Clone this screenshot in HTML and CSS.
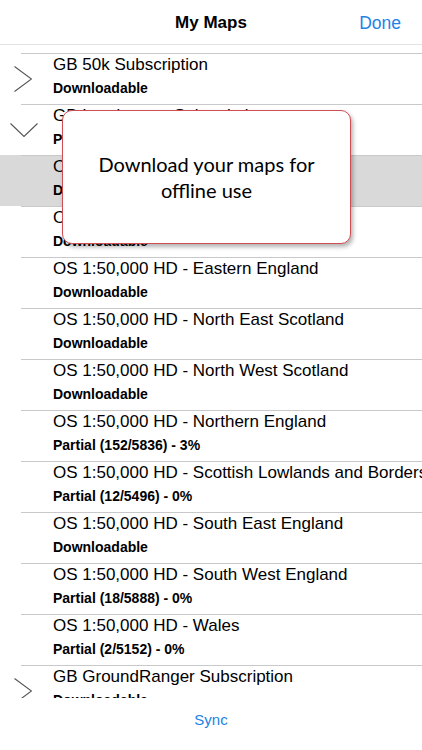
FILE: index.html
```html
<!DOCTYPE html>
<html lang="en">

<head>
    <meta charset="UTF-8">
    <title>My Maps</title>
    <link rel="stylesheet" href="styles.css">
</head>

<body>
    <header class="topbar">
        <span class="topbar_spacer"></span>
        <h1 class="topbar_title">My Maps</h1>
        <a href="#" class="topbar_done">Done</a>
    </header>

    <main class="maps">
        <section class="maps_list">
            <article class="map">
                <div class="map_mark">
                    <svg width="18" height="26" viewBox="0 0 18 26"><path d="M0.5 0.5 L17.5 13 L0.5 25.5" fill="none" stroke="#555" stroke-width="1.1"/></svg>
                </div>
                <div class="map_text">
                    <p class="map_name">GB 50k Subscription</p>
                    <p class="map_state">Downloadable</p>
                </div>
            </article>
            <article class="map">
                <div class="map_mark open">
                    <svg width="28" height="14" viewBox="0 0 28 14"><path d="M0.5 0.5 L14 13.5 L27.5 0.5" fill="none" stroke="#555" stroke-width="1.1"/></svg>
                </div>
                <div class="map_text">
                    <p class="map_name">GB Landranger Subscription</p>
                    <p class="map_state">Partial (164/96376) - 0%</p>
                </div>
            </article>
            <article class="map valgt">
                <div class="map_mark"></div>
                <div class="map_text">
                    <p class="map_name">OS 1:50,000 HD - Central England</p>
                    <p class="map_state">Downloadable</p>
                </div>
            </article>
            <article class="map">
                <div class="map_mark"></div>
                <div class="map_text">
                    <p class="map_name">OS 1:50,000 HD - Central Scotland</p>
                    <p class="map_state">Downloadable</p>
                </div>
            </article>
            <article class="map">
                <div class="map_mark"></div>
                <div class="map_text">
                    <p class="map_name">OS 1:50,000 HD - Eastern England</p>
                    <p class="map_state">Downloadable</p>
                </div>
            </article>
            <article class="map">
                <div class="map_mark"></div>
                <div class="map_text">
                    <p class="map_name">OS 1:50,000 HD - North East Scotland</p>
                    <p class="map_state">Downloadable</p>
                </div>
            </article>
            <article class="map">
                <div class="map_mark"></div>
                <div class="map_text">
                    <p class="map_name">OS 1:50,000 HD - North West Scotland</p>
                    <p class="map_state">Downloadable</p>
                </div>
            </article>
            <article class="map">
                <div class="map_mark"></div>
                <div class="map_text">
                    <p class="map_name">OS 1:50,000 HD - Northern England</p>
                    <p class="map_state">Partial (152/5836) - 3%</p>
                </div>
            </article>
            <article class="map">
                <div class="map_mark"></div>
                <div class="map_text">
                    <p class="map_name">OS 1:50,000 HD - Scottish Lowlands and Borders</p>
                    <p class="map_state">Partial (12/5496) - 0%</p>
                </div>
            </article>
            <article class="map">
                <div class="map_mark"></div>
                <div class="map_text">
                    <p class="map_name">OS 1:50,000 HD - South East England</p>
                    <p class="map_state">Downloadable</p>
                </div>
            </article>
            <article class="map">
                <div class="map_mark"></div>
                <div class="map_text">
                    <p class="map_name">OS 1:50,000 HD - South West England</p>
                    <p class="map_state">Partial (18/5888) - 0%</p>
                </div>
            </article>
            <article class="map">
                <div class="map_mark"></div>
                <div class="map_text">
                    <p class="map_name">OS 1:50,000 HD - Wales</p>
                    <p class="map_state">Partial (2/5152) - 0%</p>
                </div>
            </article>
            <article class="map">
                <div class="map_mark">
                    <svg width="18" height="26" viewBox="0 0 18 26"><path d="M0.5 0.5 L17.5 13 L0.5 25.5" fill="none" stroke="#555" stroke-width="1.1"/></svg>
                </div>
                <div class="map_text">
                    <p class="map_name">GB GroundRanger Subscription</p>
                    <p class="map_state">Downloadable</p>
                </div>
            </article>
        </section>

        <div class="tip">
            <p>Download your maps for<br>offline use</p>
        </div>
    </main>

    <footer class="bottombar">
        <a href="#" class="bottombar_sync">Sync</a>
    </footer>
</body>

</html>
```

FILE: styles.css
```css
body {
    margin: 0;
    width: 422px;
    height: 750px;
    overflow: hidden;
    background-color: #fff;
    font-family: "Liberation Sans", Arial, sans-serif;
    color: #000;
}

p {
    margin: 0;
}

a {
    text-decoration: none;
    color: #2283e6;
}

.topbar {
    height: 45px;
    border-bottom: 1px solid #e3e3e3;
    display: grid;
    grid-template-columns: 1fr auto 1fr;
    align-items: center;
    padding-top: 2px;
    box-sizing: border-box;
}

.topbar_title {
    margin: 0;
    font-size: 17px;
    font-weight: 700;
}

.topbar_done {
    justify-self: end;
    padding-right: 21px;
    font-size: 17.5px;
}

.maps {
    position: relative;
    height: 653px;
    overflow: hidden;
}

.maps_list {
    padding-top: 8px;
}

.map {
    display: flex;
    height: 51px;
    background: linear-gradient(#c9c9cc, #c9c9cc) 21px 0 / 100% 1px no-repeat;
}

.map.valgt {
    background-color: #d9d9d9;
}

.map_mark {
    width: 53px;
    flex: none;
    display: flex;
    align-items: center;
    padding: 1px 0 0 14px;
    box-sizing: border-box;
}

.map_mark.open {
    padding-left: 10px;
}

.map_mark svg {
    display: block;
}

.map_text {
    min-width: 0;
    padding-top: 2px;
}

.map_name {
    font-size: 17px;
    line-height: 20px;
    white-space: nowrap;
}

.map_state {
    margin-top: 5px;
    font-size: 14px;
    font-weight: 700;
    line-height: 17px;
    white-space: nowrap;
}

.tip {
    position: absolute;
    left: 62px;
    top: 65px;
    width: 287px;
    height: 132px;
    background-color: #fff;
    border: 1.5px solid #d24c53;
    border-radius: 10px;
    box-shadow: 2px 3px 4px rgba(0, 0, 0, 0.3);
    display: flex;
    align-items: center;
    justify-content: center;
}

.tip p {
    font-family: Lato, "Open Sans", sans-serif;
    font-size: 20px;
    line-height: 26px;
    text-align: center;
}

.bottombar {
    height: 52px;
    display: flex;
    justify-content: center;
    padding-top: 13px;
    box-sizing: border-box;
}

.bottombar_sync {
    font-size: 15px;
}
```
